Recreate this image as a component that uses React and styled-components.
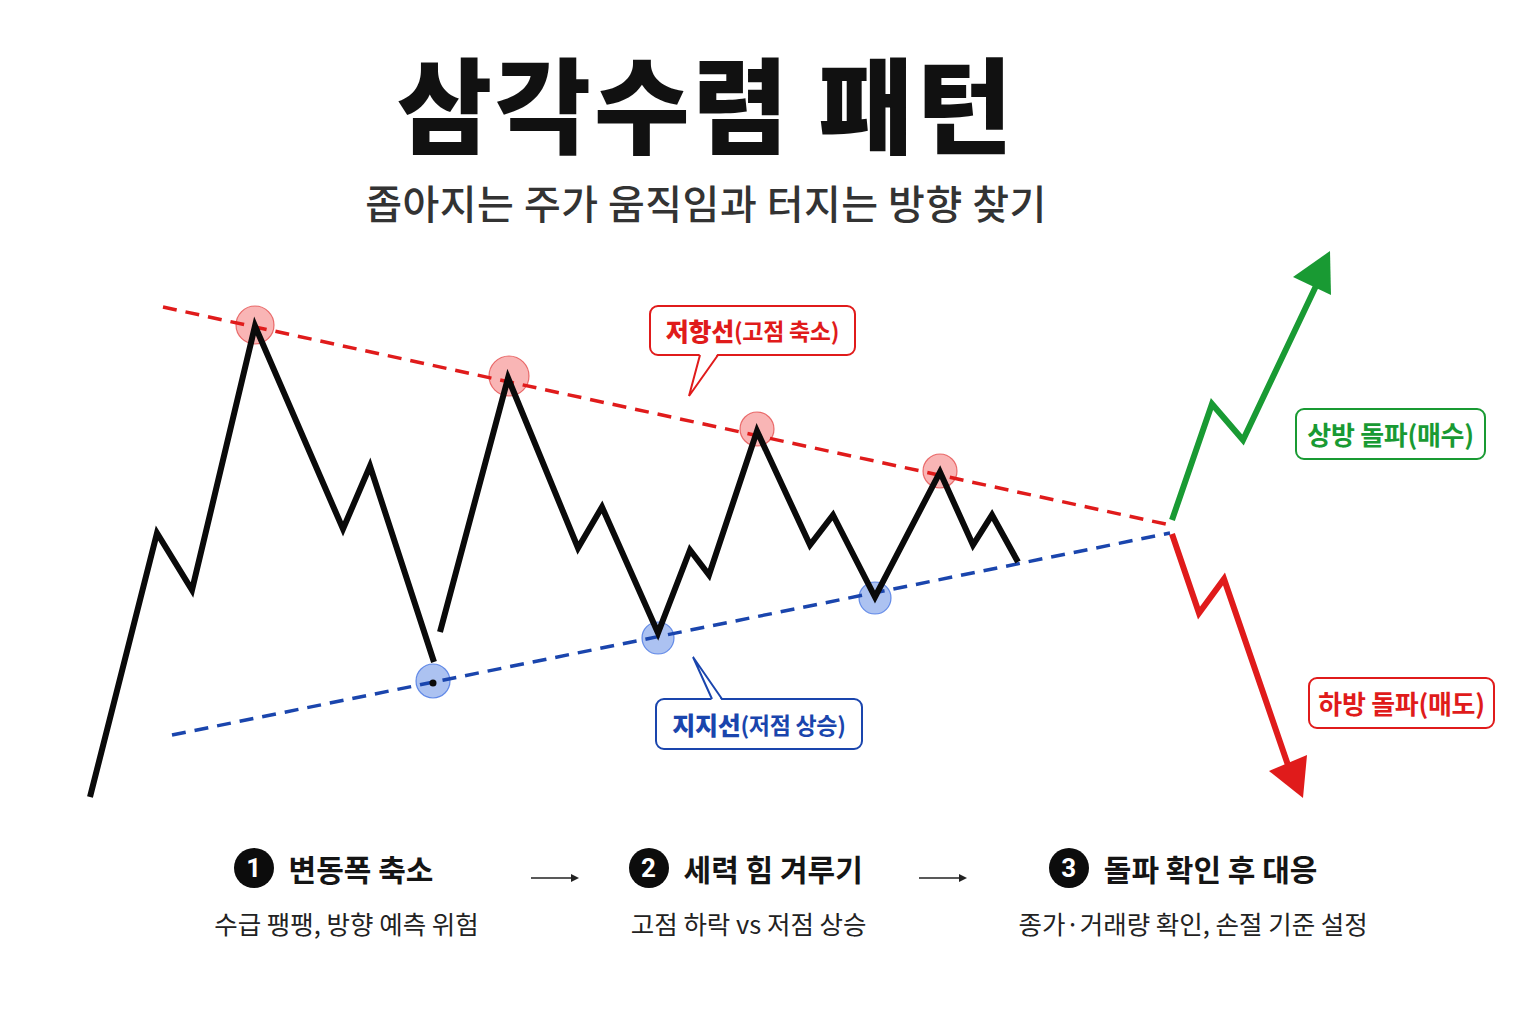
import React from 'react';
import styled, { createGlobalStyle } from 'styled-components';

const GlobalStyle = createGlobalStyle`
  html, body {
    margin: 0;
    padding: 0;
    background: #fff;
  }
`;

const Page = styled.div`
  width: 1536px;
  height: 1024px;
  background: #fff;
  font-family: "Noto Sans CJK KR", "Noto Sans", sans-serif;
  color: #111;
  overflow: hidden;
`;

const Header = styled.header`
  display: flex;
  flex-direction: column;
  align-items: center;
  padding: 41px 124px 0 0;
`;

const Title = styled.h1`
  margin: 0;
  font-size: 104px;
  font-weight: 900;
  line-height: 1.15;
  letter-spacing: 3px;
  color: #111;
`;

const Subtitle = styled.p`
  margin: 19px 0 0 0;
  font-size: 40px;
  font-weight: 500;
  line-height: 1.1;
  letter-spacing: 0.5px;
  color: #333;
`;

const Chart = styled.div`
  position: relative;
  height: 570px;
  margin-top: 16px;
`;

const ChartSvg = styled.svg`
  display: block;
  width: 1536px;
  height: 570px;
`;

const Callout = styled.div`
  position: absolute;
  left: ${p => p.$x}px;
  top: ${p => p.$y - 240}px;
  width: ${p => p.$w}px;
  height: ${p => p.$h}px;
  box-sizing: border-box;
  border: 2px solid ${p => p.$color};
  border-radius: 9px;
  background: #fff;
  display: flex;
  align-items: center;
  justify-content: center;
  color: ${p => p.$color};
  font-size: ${p => p.$size}px;
  font-weight: 700;
  letter-spacing: -0.3px;
  white-space: nowrap;
`;

const Lead = styled.span`
  font-size: 25px;
  font-weight: 900;
`;

const Tail = styled.svg`
  position: absolute;
  left: -2px;
  top: -2px;
  width: 1px;
  height: 1px;
  overflow: visible;
`;

const Steps = styled.section`
  display: flex;
  justify-content: center;
  align-items: flex-start;
  gap: 52px;
  padding-left: 46px;
  margin-top: 36px;
`;

const Step = styled.div`
  display: flex;
  flex-direction: column;
  align-items: center;
`;

const StepHead = styled.div`
  display: flex;
  align-items: center;
  gap: 15px;
  margin-left: ${p => p.$shift || 0}px;
`;

const Badge = styled.span`
  width: 40px;
  height: 40px;
  border-radius: 50%;
  background: #0c0c0c;
  color: #fff;
  display: flex;
  align-items: center;
  justify-content: center;
  font-size: 26px;
  font-weight: 700;
  font-family: "Roboto", "Noto Sans", sans-serif;
`;

const StepTitle = styled.span`
  font-size: 30px;
  font-weight: 700;
  color: #151515;
`;

const StepText = styled.span`
  margin-top: 14px;
  font-size: 25.5px;
  font-weight: 400;
  color: #222;
`;

const ArrowBox = styled.div`
  margin-top: 19px;
  width: 48px;
  height: 12px;
`;

function CalloutBox({ x, y, w, h, color, size, tail, lead, rest }) {
  const bottom = h;
  return (
    <Callout $x={x} $y={y} $w={w} $h={h} $color={color} $size={size}>
      {lead && <Lead>{lead}</Lead>}{rest}
      {tail && (
        <Tail>
          {tail.dir === 'down' ? (
            <>
              <polygon points={`${tail.l},${bottom - 3} ${tail.r},${bottom - 3} ${tail.tx},${tail.ty}`} fill="#fff" />
              <polyline points={`${tail.l},${bottom - 1} ${tail.tx},${tail.ty} ${tail.r},${bottom - 1}`} fill="none" stroke={color} strokeWidth="2" strokeLinejoin="miter" />
            </>
          ) : (
            <>
              <polygon points={`${tail.l},3 ${tail.r},3 ${tail.tx},${tail.ty}`} fill="#fff" />
              <polyline points={`${tail.l},1 ${tail.tx},${tail.ty} ${tail.r},1`} fill="none" stroke={color} strokeWidth="2" strokeLinejoin="miter" />
            </>
          )}
        </Tail>
      )}
    </Callout>
  );
}

function StepArrow() {
  return (
    <ArrowBox>
      <svg width="48" height="12" viewBox="0 0 48 12">
        <line x1="0" y1="6" x2="42" y2="6" stroke="#222" strokeWidth="1.6" />
        <polygon points="40,2 48,6 40,10" fill="#222" />
      </svg>
    </ArrowBox>
  );
}

const RED = '#e01b1b';
const BLUE = '#1a45ad';
const GREEN = '#199a33';

const price1 = '90,797 157,533 192,590 255,326 343,529 370,466 434,662';
const price2 = '440,632 508,378 578,548 602,507 658,633 690,550 709,575 757,431 810,545 833,515 875,597 940,472 973,545 992,515 1018,562';

const highs = [
  [255, 325, 19],
  [509, 376, 20],
  [757, 429, 17],
  [940, 471, 17],
];
const lows = [
  [433, 681, 17],
  [658, 638, 16],
  [875, 598, 16],
];

const steps = [
  { n: '1', title: '변동폭 축소', text: '수급 팽팽, 방향 예측 위험', shift: -26 },
  { n: '2', title: '세력 힘 겨루기', text: '고점 하락 vs 저점 상승', shift: -6 },
  { n: '3', title: '돌파 확인 후 대응', text: '종가·거래량 확인, 손절 기준 설정', shift: -20 },
];

export default function App() {
  return (
    <Page>
      <GlobalStyle />
      <Header>
        <Title>삼각수렴 패턴</Title>
        <Subtitle>좁아지는 주가 움직임과 터지는 방향 찾기</Subtitle>
      </Header>

      <Chart>
        <ChartSvg viewBox="0 240 1536 570">
          {highs.map(([cx, cy, r]) => (
            <circle key={cx} cx={cx} cy={cy} r={r} fill="rgba(240,70,70,0.4)" stroke="rgba(225,60,60,0.7)" strokeWidth="1.2" />
          ))}
          {lows.map(([cx, cy, r]) => (
            <circle key={cx} cx={cx} cy={cy} r={r} fill="rgba(70,120,225,0.45)" stroke="rgba(60,110,225,0.75)" strokeWidth="1.2" />
          ))}
          <line x1="163" y1="307" x2="1170" y2="525" stroke={RED} strokeWidth="3.5" strokeDasharray="14 9" />
          <line x1="172" y1="735" x2="1170" y2="533" stroke={BLUE} strokeWidth="3.5" strokeDasharray="14 9" />

          <polyline points={price1} fill="none" stroke="#0a0a0a" strokeWidth="6" strokeLinejoin="miter" strokeMiterlimit="10" />
          <polyline points={price2} fill="none" stroke="#0a0a0a" strokeWidth="6" strokeLinejoin="miter" strokeMiterlimit="10" />
          <circle cx="433" cy="683" r="3.5" fill="#0a0a0a" />

          <polyline points="1172,520 1212,404 1243,440 1316,286" fill="none" stroke={GREEN} strokeWidth="6" strokeLinejoin="miter" />
          <polygon points="1330,251 1293,277 1331,295" fill={GREEN} />

          <polyline points="1172,534 1199,613 1224,579 1289,768" fill="none" stroke={RED} strokeWidth="6" strokeLinejoin="miter" />
          <polygon points="1303,798 1269,771 1307,755" fill={RED} />
        </ChartSvg>

        <CalloutBox
          x={649} y={305} w={207} h={51} color={RED} size={23}
          lead="저항선" rest="(고점 축소)"
          tail={{ dir: 'down', l: 51, r: 69, tx: 40, ty: 91 }}
        />
        <CalloutBox
          x={655} y={698} w={208} h={52} color={BLUE} size={23}
          lead="지지선" rest="(저점 상승)"
          tail={{ dir: 'up', l: 57, r: 67, tx: 38, ty: -41 }}
        />
        <CalloutBox x={1295} y={408} w={191} h={52} color={GREEN} size={26} rest="상방 돌파(매수)" />
        <CalloutBox x={1308} y={677} w={187} h={52} color={RED} size={26} rest="하방 돌파(매도)" />
      </Chart>

      <Steps>
        {steps.map((s, i) => (
          <React.Fragment key={s.n}>
            {i > 0 && <StepArrow />}
            <Step>
              <StepHead $shift={s.shift}>
                <Badge>{s.n}</Badge>
                <StepTitle>{s.title}</StepTitle>
              </StepHead>
              <StepText>{s.text}</StepText>
            </Step>
          </React.Fragment>
        ))}
      </Steps>
    </Page>
  );
}
